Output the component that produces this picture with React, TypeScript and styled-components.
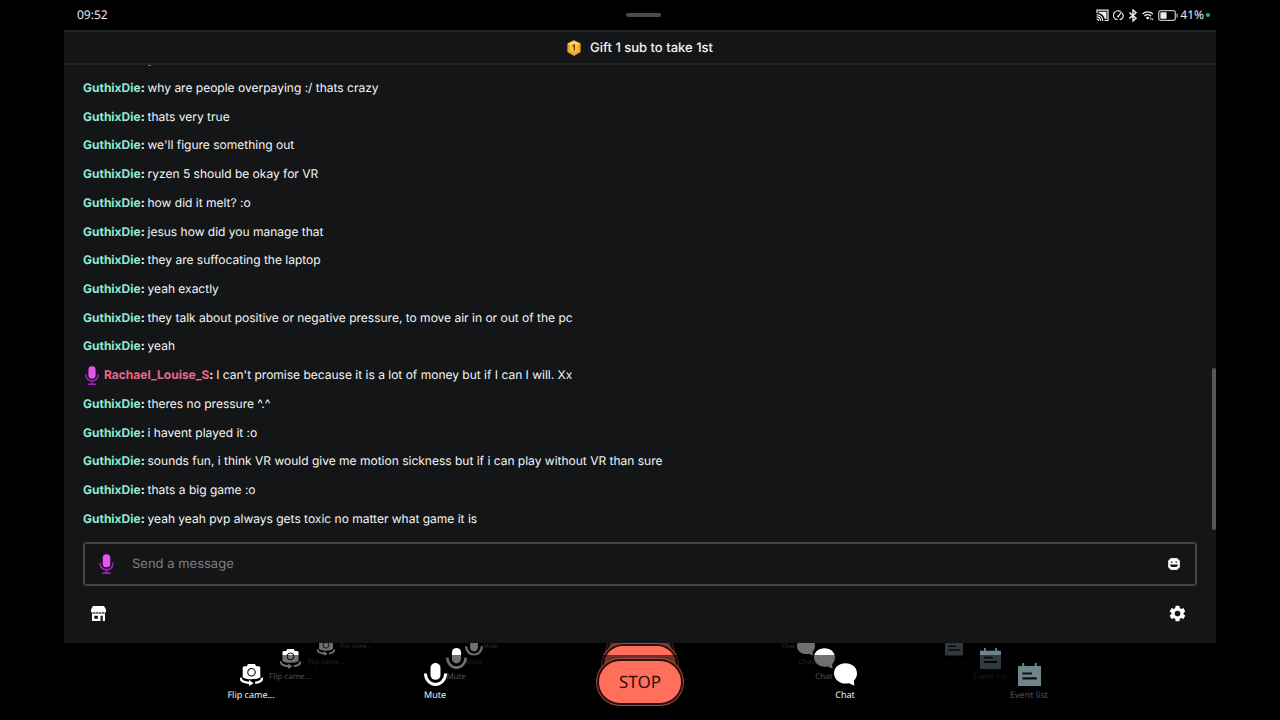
import React from 'react';
import styled, { createGlobalStyle } from 'styled-components';

const GlobalStyle = createGlobalStyle`
  *, *::before, *::after { box-sizing: border-box; }
  body { margin: 0; background: #000; color: #f4f5f6; font-family: Inter, "Liberation Sans", sans-serif; }
  body, button, input { text-rendering: geometricPrecision; }
  button { border: 0; padding: 0; background: none; color: inherit; font: inherit; cursor: pointer; }
  ul { list-style: none; margin: 0; padding: 0; }
  svg { display: block; flex: none; }
`;

const Screen = styled.div`
  display: flex;
  flex-direction: column;
  height: 100vh;
  min-height: 480px;
  overflow: hidden;
`;

const StatusBar = styled.header`
  display: grid;
  grid-template-columns: 1fr auto 1fr;
  align-items: center;
  height: 30px;
  padding: 0 6px 0 13px;
  margin: 0 5%;
  font: 12px/16px "Noto Sans", sans-serif;
  color: #ececec;
`;

const Handle = styled.div`
  width: 35px;
  height: 4px;
  border-radius: 2px;
  background: #4a4a4a;
`;

const StatusIcons = styled.div`
  display: flex;
  align-items: center;
  justify-content: flex-end;
  gap: 4px;
`;

const Battery = styled.div`
  display: flex;
  align-items: center;
  gap: 2px;
`;

const OnlineDot = styled.i`
  width: 4px;
  height: 4px;
  border-radius: 50%;
  background: #2fae83;
`;

const Panel = styled.main`
  display: flex;
  flex-direction: column;
  flex: 1;
  min-height: 0;
  margin: 0 5%;
  background: #141517;
`;

const Banner = styled.div`
  display: flex;
  align-items: center;
  justify-content: center;
  gap: 9px;
  height: 35px;
  border-top: 2px solid #222427;
  border-bottom: 2px solid #222427;
  font-size: 13px;
  font-weight: 500;
  line-height: 20px;
`;

const Log = styled.section`
  position: relative;
  display: flex;
  flex: 1;
  min-height: 0;
  overflow: hidden;
`;

const Messages = styled.ul`
  display: grid;
  grid-auto-rows: 1fr;
  flex: 1;
  margin: -20px 19px 9px;
`;

const Message = styled.li`
  display: flex;
  align-items: center;
  min-height: 0;
  font-size: 12px;
  line-height: 20px;
  white-space: pre;
`;

const Author = styled.strong<{ $color: string }>`
  color: ${(p) => p.$color};
  font-weight: 700;
`;

const Colon = styled.b`
  font-weight: 700;
`;

const Badge = styled.span`
  margin: 0 5px 0 2px;
`;

const ScrollThumb = styled.div`
  position: absolute;
  right: 0;
  bottom: 12px;
  width: 4px;
  height: 34%;
  border-radius: 2px;
  background: #55575a;
`;

const Composer = styled.form`
  display: flex;
  align-items: center;
  gap: 18px;
  height: 44px;
  margin: 0 19px;
  padding: 0 15px 0 14px;
  border: 2px solid #434548;
  border-radius: 4px;
`;

const MessageInput = styled.input`
  flex: 1;
  min-width: 0;
  border: 0;
  padding: 0;
  outline: 0;
  background: none;
  color: #f4f5f6;
  font: 13px/20px Inter, sans-serif;
  &::placeholder { color: #7c7f84; opacity: 1; }
`;

const Actions = styled.div`
  display: flex;
  align-items: flex-start;
  justify-content: space-between;
  height: 57px;
  padding: 19px 30px 0 26px;
`;

const IconButton = styled.button`
  flex: none;
`;

const Dock = styled.footer`
  position: relative;
  height: 77px;
  padding-top: 12px;
  overflow: hidden;
`;

type Scale = { icon: number; font: number; line: number; item: number; gap: number; mid: number; stop: number; stopHeight: number; stopFont: number };

const DockLayer = styled.div<{ $mid: number; $top?: number }>`
  position: ${(p) => (p.$top === undefined ? 'relative' : 'absolute')};
  top: ${(p) => p.$top ?? 0}px;
  left: 0;
  right: 0;
  height: 80px;
  display: flex;
  align-items: flex-start;
  justify-content: center;
  gap: ${(p) => p.$mid}px;
  background: rgba(0, 0, 0, 0.56);
`;

const DockGroup = styled.div<{ $gap: number }>`
  display: flex;
  gap: ${(p) => p.$gap}px;
`;

const DockButton = styled.button<{ $width: number; $font: number; $line: number; $dim?: boolean }>`
  display: flex;
  flex-direction: column;
  align-items: center;
  gap: 3px;
  width: ${(p) => p.$width}px;
  padding-top: 8px;
  color: ${(p) => (p.$dim ? '#6f858e' : '#fff')};
  font: ${(p) => p.$font}px/${(p) => p.$line}px "Noto Sans", sans-serif;
`;

const DockLabel = styled.span<{ $dim?: boolean; $ghost?: boolean }>`
  white-space: nowrap;
  color: ${(p) => (p.$dim ? '#505356' : '#f2f2f2')};
  opacity: ${(p) => (p.$ghost ? 0.7 : 1)};
`;

const StopButton = styled.button<{ $width: number; $height: number; $font: number }>`
  display: flex;
  align-items: center;
  justify-content: center;
  width: ${(p) => p.$width}px;
  height: ${(p) => p.$height}px;
  margin-top: 4px;
  border: 2px solid #2c100c;
  border-radius: 24px;
  background: #ff6f5b;
  box-shadow: 0 0 0 1px #a34a3c;
  color: #2c100c;
  font: ${(p) => p.$font}px/20px "Noto Sans", sans-serif;
`;

const MicIcon = ({ width, height }: { width: number; height: number }) => (
  <svg width={width} height={height} viewBox="0 0 14 19" aria-hidden="true">
    <rect x="3.4" y="0.3" width="7.2" height="12.4" rx="3.4" fill="#e356ea" />
    <path d="M1 8.2v1.4a6 5.4 0 0 0 12 0V8.2M7 15v3M3 18.2h8" fill="none" stroke="#a01fc4" strokeWidth="1.5" />
  </svg>
);

const CastIcon = () => (
  <svg width="13" height="13" viewBox="0 0 13 13" fill="none" stroke="currentColor" strokeWidth="1.2" aria-hidden="true">
    <path d="M1 4V1.2h11v10.3H8.5" />
    <path d="M2.5 2.7h8v7.3H8.8C8 6.8 6 4.4 2.5 4z" fill="currentColor" stroke="none" />
    <path d="M.6 5.6c3.5 0 6.2 2.6 6.2 6.3M.6 7.8c2.4 0 4.1 1.7 4.1 4.1M.6 10c1.2 0 2 .8 2 1.9" />
  </svg>
);

const GaugeIcon = () => (
  <svg width="11" height="11" viewBox="0 0 12 12" fill="none" stroke="currentColor" strokeWidth="1.3" strokeLinecap="round" aria-hidden="true">
    <path d="M3 10.2A4.9 4.9 0 0 1 7.8 1.5M10.3 3.8A4.9 4.9 0 0 1 9 10.2M3 10.2h1.5M9 10.2H7.6M5.5 7.2 9 2.6" />
    <circle cx="5.6" cy="7.1" r="1" fill="currentColor" stroke="none" />
  </svg>
);

const BluetoothIcon = () => (
  <svg width="10" height="13" viewBox="0 0 10 13" fill="none" stroke="currentColor" strokeWidth="1.4" aria-hidden="true">
    <path d="m1.4 3.6 6.7 5.7L5 12V1l3.1 2.7-6.7 5.7" />
  </svg>
);

const WifiIcon = () => (
  <svg width="12" height="11" viewBox="0 0 13 11" fill="none" stroke="currentColor" strokeWidth="1.5" aria-hidden="true">
    <path d="M.6 3.8a8 8 0 0 1 11.2 0M2.6 6a5.3 5.3 0 0 1 7.2 0" />
    <path d="M4.1 7.8a3 3 0 0 1 4.2 0L6.2 10z" fill="currentColor" stroke="none" />
    <path d="M9.6 7.8v2.6M11.6 8.6v2" strokeWidth="1" />
  </svg>
);

const BatteryIcon = () => (
  <svg width="20" height="11" viewBox="0 0 20 11" aria-hidden="true">
    <rect x="0.7" y="0.7" width="16.6" height="9.6" rx="2" fill="none" stroke="#b8b8b8" strokeWidth="1.3" />
    <rect x="2.4" y="2.3" width="6.2" height="6.4" rx="0.6" fill="currentColor" />
    <path d="M19.1 3.5v4" stroke="#b8b8b8" strokeWidth="1.2" />
  </svg>
);

const GiftBadgeIcon = () => (
  <svg width="14" height="16" viewBox="0 0 14 16" aria-hidden="true">
    <path d="M7 .9 13 3.8v8L7 15.1 1 11.8v-8z" fill="#f2a32c" stroke="#f2a32c" strokeWidth="1.2" strokeLinejoin="round" />
    <path d="M7 .9 13 3.8 11 5.2 7 3 3 5.2 1 3.8z" fill="#ffd768" />
    <path d="M7 3 11 5.2v5.2L7 12.8l-4-2.4V5.2z" fill="#f9bf48" />
    <path d="M5.7 6.2 7.3 5.2v5.4" fill="none" stroke="#70420d" strokeWidth="1.4" />
  </svg>
);

const SmileIcon = () => (
  <svg width="12" height="12" viewBox="0 0 12 12" aria-hidden="true">
    <path d="M3 .3h6L11.7 3v6L9 11.7H3L.3 9V3z" fill="#fff" stroke="#fff" strokeWidth="0.6" strokeLinejoin="round" />
    <path d="M3 3.4h1.5v1.4H3zM7.5 3.4H9v1.4H7.5zM2.2 6.6h7.6v1.2L8.4 9H3.6L2.2 7.800z" fill="#141517" />
  </svg>
);

const StoreIcon = () => (
  <svg width="17" height="17" viewBox="0 0 17 17" aria-hidden="true">
    <path d="M3 1h11l2 3.6v2.2L14.6 8 13 6.9 11.5 8 10 6.9 8.5 8 7 6.9 5.5 8 4 6.9 2.4 8 1 6.800V4.600z" fill="#fff" />
    <path d="M2 8.600h13V16h-2.300v-5.300h-2.200V16H2zM4.300 10.700v3h3.600v-3z" fill="#fff" fillRule="evenodd" />
  </svg>
);

const GearIcon = () => (
  <svg width="17" height="17" viewBox="0 0 24 24" aria-hidden="true">
    <path
      d="M9.4 1h5.2l.6 3.3 1.9 1.3 3.3-1.2L23 9l-2.6 2.2v1.600L23 15l-2.600 4.600-3.300-1.200-1.900 1.300-.6 3.300H9.400l-.6-3.300-1.900-1.300-3.300 1.200L1 15l2.600-2.200v-1.600L1 9l2.600-4.600 3.300 1.200 1.900-1.300zM12 8a4 4 0 1 0 0 8 4 4 0 0 0 0-8z"
      fill="#fff"
      fillRule="evenodd"
    />
  </svg>
);

const FlipIcon = ({ size }: { size: number }) => (
  <svg width={size} height={size} viewBox="0 0 24 24" fill="none" aria-hidden="true">
    <path d="M4.4 3.400h2.600L8.400 1h7.200L17 3.400h2.600A1.600 1.600 0 0 1 21.200 5v9.800c-2 1.400-5.200 2.100-9.200 2.100s-7.200-.7-9.200-2.100V5a1.600 1.600 0 0 1 1.600-1.600z" fill="currentColor" />
    <circle cx="12" cy="9.600" r="3.900" stroke="#000" strokeWidth="1.100" />
    <path d="M1.600 15.400c-1.800 2.800 2 5.200 9.200 5.600M22.400 15.400c1.400 2.400-1 4.600-6.600 5.400" stroke="currentColor" strokeWidth="2.400" />
    <path d="m9.400 17.800 4.800 3.200-4.800 3z" fill="currentColor" />
  </svg>
);

const MuteIcon = ({ size }: { size: number }) => (
  <svg width={size} height={size} viewBox="0 0 24 24" fill="none" aria-hidden="true">
    <rect x="6.8" y="0" width="10.4" height="17.6" rx="5.2" fill="currentColor" />
    <path d="M1.500 11a10.500 11.500 0 0 0 21 0" stroke="currentColor" strokeWidth="3" />
  </svg>
);

const ChatIcon = ({ size }: { size: number }) => (
  <svg width={size} height={size} viewBox="0 0 24 24" aria-hidden="true">
    <path d="M12 .2c6.8 0 12 4.4 12 10.4 0 3.600-1.400 6-3.200 7.600l.4 5.600-5.400-2.800c-1.200.3-2.500.4-3.800.4-6.800 0-12-4.800-12-10.800S5.200.2 12 .2z" fill="currentColor" />
  </svg>
);

const EventIcon = ({ size }: { size: number }) => (
  <svg width={size} height={size} viewBox="0 0 24 24" aria-hidden="true">
    <path d="M0 3h4.500V0h2v3h11V0h2v3H24v21H0z" fill="currentColor" />
    <path d="M4.500 11h10M4.500 16h15" stroke="#0a1216" strokeWidth="2.200" />
  </svg>
);

const frontScale: Scale = { icon: 23, font: 9, line: 12, item: 80, gap: 104, mid: 122, stop: 86, stopHeight: 46, stopFont: 17 };

// Trailing copies of the dock, listed from the farthest to the nearest.
const trail: { top: number; scale: Scale }[] = [
  { top: -13, scale: { icon: 18, font: 7, line: 8, item: 64, gap: 84, mid: 100, stop: 68, stopHeight: 38, stopFont: 13 } },
  { top: -3, scale: { icon: 21, font: 8, line: 10, item: 72, gap: 94, mid: 110, stop: 76, stopHeight: 42, stopFont: 15 } },
];

function DockItem({ icon: Icon, label, scale, dim, ghost }: { icon: React.FC<{ size: number }>; label: string; scale: Scale; dim?: boolean; ghost: boolean }) {
  return (
    <DockButton as={ghost ? 'div' : 'button'} $width={scale.item} $font={scale.font} $line={scale.line} $dim={dim}>
      <Icon size={scale.icon} />
      <DockLabel $dim={dim} $ghost={ghost}>{label}</DockLabel>
    </DockButton>
  );
}

function DockRow({ scale, top }: { scale: Scale; top?: number }) {
  const ghost = top !== undefined;
  return (
    <DockLayer $mid={scale.mid} $top={top} aria-hidden={ghost}>
      <DockGroup $gap={scale.gap}>
        <DockItem icon={FlipIcon} label="Flip came…" scale={scale} ghost={ghost} />
        <DockItem icon={MuteIcon} label="Mute" scale={scale} ghost={ghost} />
      </DockGroup>
      <StopButton as={ghost ? 'div' : 'button'} $width={scale.stop} $height={scale.stopHeight} $font={scale.stopFont}>
        STOP
      </StopButton>
      <DockGroup $gap={scale.gap}>
        <DockItem icon={ChatIcon} label="Chat" scale={scale} ghost={ghost} />
        <DockItem icon={EventIcon} label="Event list" scale={scale} dim ghost={ghost} />
      </DockGroup>
    </DockLayer>
  );
}

const FarLabels = styled.div`
  position: absolute;
  top: -1px;
  left: 0;
  right: 0;
  display: flex;
  justify-content: center;
  gap: 284px;
  color: #e4e4e4;
  font: 6px/8px "Noto Sans", sans-serif;
`;

const FarGroup = styled.div`
  display: flex;
  justify-content: space-between;
  width: 158px;
`;

const GUTHIX = '#8ee9d4';
const RACHAEL = '#e8678a';

const messages: { text: string; author?: string; color?: string; mic?: boolean }[] = [
  { text: 'yeah' },
  { text: 'why are people overpaying :/ thats crazy' },
  { text: 'thats very true' },
  { text: "we'll figure something out" },
  { text: 'ryzen 5 should be okay for VR' },
  { text: 'how did it melt? :o' },
  { text: 'jesus how did you manage that' },
  { text: 'they are suffocating the laptop' },
  { text: 'yeah exactly' },
  { text: 'they talk about positive or negative pressure, to move air in or out of the pc' },
  { text: 'yeah' },
  { author: 'Rachael_Louise_S', color: RACHAEL, mic: true, text: "I can't promise because it is a lot of money but if I can I will. Xx" },
  { text: 'theres no pressure ^.^' },
  { text: 'i havent played it :o' },
  { text: 'sounds fun, i think VR would give me motion sickness but if i can play without VR than sure' },
  { text: 'thats a big game :o' },
  { text: 'yeah yeah pvp always gets toxic no matter what game it is' },
];

export default function App() {
  return (
    <>
      <GlobalStyle />
      <Screen>
        <StatusBar>
          <time>09:52</time>
          <Handle />
          <StatusIcons>
            <CastIcon />
            <GaugeIcon />
            <BluetoothIcon />
            <WifiIcon />
            <Battery>
              <BatteryIcon />
              <span>41%</span>
              <OnlineDot />
            </Battery>
          </StatusIcons>
        </StatusBar>
        <Panel>
          <Banner>
            <GiftBadgeIcon />
            <span>Gift 1 sub to take 1st</span>
          </Banner>
          <Log aria-label="Chat messages">
            <Messages>
              {messages.map((m, i) => (
                <Message key={i}>
                  {m.mic && <Badge><MicIcon width={14} height={19} /></Badge>}
                  <Author $color={m.color ?? GUTHIX}>{m.author ?? 'GuthixDie'}</Author>
                  <Colon>: </Colon>
                  <span>{m.text}</span>
                </Message>
              ))}
            </Messages>
            <ScrollThumb />
          </Log>
          <Composer onSubmit={(e) => e.preventDefault()}>
            <MicIcon width={15} height={20} />
            <MessageInput aria-label="Send a message" placeholder="Send a message" />
            <IconButton type="button" aria-label="Emotes"><SmileIcon /></IconButton>
          </Composer>
          <Actions>
            <IconButton type="button" aria-label="Store"><StoreIcon /></IconButton>
            <IconButton type="button" aria-label="Settings"><GearIcon /></IconButton>
          </Actions>
        </Panel>
        <Dock>
          <FarLabels aria-hidden>
            <FarGroup><span>Flip came…</span><span>Mute</span></FarGroup>
            <FarGroup><span>Chat</span></FarGroup>
          </FarLabels>
          {trail.map((t) => <DockRow key={t.top} scale={t.scale} top={t.top} />)}
          <DockRow scale={frontScale} />
        </Dock>
      </Screen>
    </>
  );
}
